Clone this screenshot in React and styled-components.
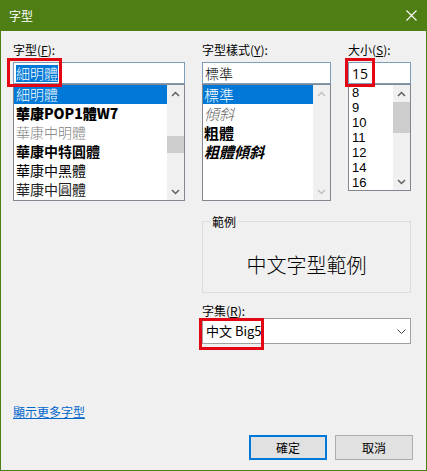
import React from 'react';
import styled, { createGlobalStyle } from 'styled-components';

const CJK = `"Noto Sans CJK TC", "Noto Sans", sans-serif`;
const NUM = `"Open Sans", "Noto Sans CJK TC", sans-serif`;
const SMALLNUM = `"Liberation Sans", Arial, sans-serif`;

const GlobalStyle = createGlobalStyle`
  html, body { margin: 0; padding: 0; background: #f0f0f0; }
  body { font-family: ${CJK}; color: #000; }
  * { box-sizing: border-box; }
`;

const Window = styled.div`
  width: 427px;
  height: 471px;
  display: flex;
  flex-direction: column;
  background: #f0f0f0;
  border: 1px solid #4e7e14;
  border-top: none;
  overflow: hidden;
`;

const TitleBar = styled.div`
  height: 31px;
  flex: none;
  background: #4e7e14;
  color: #fff;
  display: flex;
  align-items: center;
  padding-left: 8px;
  font-size: 12px;
`;

const Title = styled.div`
  flex: 1;
  line-height: 16px;
`;

const CloseButton = styled.div`
  width: 30px;
  height: 31px;
  display: flex;
  align-items: center;
  justify-content: center;
`;

const Body = styled.div`
  flex: 1;
  display: flex;
  flex-direction: column;
  padding: 11px 15px 10px 12px;
`;

const Grid = styled.div`
  display: grid;
  grid-template-columns: 172px 129px 63px;
  column-gap: 17px;
  align-items: start;
`;

const Column = styled.div`
  display: flex;
  flex-direction: column;
  grid-column: ${(p) => p.$span || 'auto'};
`;

const Label = styled.div`
  font-size: 12px;
  line-height: ${(p) => (p.$tight ? '14px' : '16px')};
  height: ${(p) => (p.$tight ? '14px' : '16px')};
  margin-bottom: ${(p) => (p.$tight ? '0' : '4px')};
  margin-top: ${(p) => p.$top || '0'};
  white-space: nowrap;
  u { text-decoration: underline; text-underline-offset: 1px; }
`;

const TextBox = styled.div`
  position: relative;
  height: 22px;
  background: #fff;
  border: 1px solid #7f9db9;
  display: flex;
  align-items: center;
  font-family: ${(p) => (p.$num ? NUM : CJK)};
  font-size: 14px;
  font-weight: ${(p) => p.$weight || 400};
  padding: 0 2px 0 ${(p) => (p.$num ? '3px' : '2px')};
`;

const Selected = styled.span`
  background: #0078d7;
  color: #fff;
  line-height: 17px;
  font-weight: 300;
`;

const RedBox = styled.div`
  position: absolute;
  left: ${(p) => p.$l}px;
  top: ${(p) => p.$t}px;
  width: ${(p) => p.$w}px;
  height: ${(p) => p.$h}px;
  border: 3px solid #e30613;
  pointer-events: none;
`;

const ListBox = styled.div`
  height: ${(p) => p.$h}px;
  background: #fff;
  border: 1px solid #828790;
  display: flex;
`;

const Items = styled.div`
  flex: 1;
  display: flex;
  flex-direction: column;
`;

const Row = styled.div`
  height: ${(p) => p.$h}px;
  line-height: ${(p) => p.$h}px;
  flex: none;
  padding-left: ${(p) => p.$pad || 2}px;
  font-family: ${(p) => (p.$num ? SMALLNUM : CJK)};
  font-size: ${(p) => p.$size || 14}px;
  font-weight: ${(p) => p.$weight || 400};
  font-style: ${(p) => (p.$italic ? 'italic' : 'normal')};
  color: ${(p) => (p.$selected ? '#fff' : p.$color || '#000')};
  background: ${(p) => (p.$selected ? '#0078d7' : 'transparent')};
  white-space: nowrap;
`;

const ScrollBar = styled.div`
  width: 17px;
  flex: none;
  background: #f0f0f0;
  display: flex;
  flex-direction: column;
`;

const ArrowButton = styled.div`
  height: 17px;
  flex: none;
  display: flex;
  align-items: center;
  justify-content: center;
`;

const Track = styled.div`
  flex: 1;
  display: flex;
  flex-direction: column;
`;

const Thumb = styled.div`
  margin-top: ${(p) => p.$offset}px;
  height: ${(p) => p.$h}px;
  background: #cdcdcd;
`;

const Group = styled.fieldset`
  margin: 13px 0 0 0;
  padding: 0;
  min-width: 0;
  border: 1px solid #dcdcdc;
`;

const Legend = styled.legend`
  margin-left: 7px;
  padding: 0 2px;
  font-size: 12px;
  line-height: 15px;
`;

const Sample = styled.div`
  height: 63px;
  padding-top: 21px;
  text-align: center;
  font-size: 20px;
  line-height: 30px;
  font-weight: 300;
`;

const Combo = styled.div`
  position: relative;
  height: 26px;
  background: #fff;
  border: 1px solid #a0a0a0;
  display: flex;
  align-items: center;
  padding: 0 4px 0 3px;
  font-size: 13px;
`;

const ComboText = styled.div`
  flex: 1;
  line-height: 18px;
`;

const Link = styled.a`
  margin-top: auto;
  margin-bottom: 15px;
  align-self: flex-start;
  font-size: 12px;
  line-height: 16px;
  color: #0066cc;
  text-decoration: underline;
  cursor: pointer;
`;

const ButtonRow = styled.div`
  display: flex;
  justify-content: flex-end;
  gap: 8px;
  margin-right: -2px;
`;

const Button = styled.button`
  width: 78px;
  height: 25px;
  background: #e1e1e1;
  border: ${(p) => (p.$default ? '2px solid #0078d7' : '1px solid #adadad')};
  font-family: ${CJK};
  font-size: 12px;
  color: #000;
  padding: 0;
  display: flex;
  align-items: center;
  justify-content: center;
`;

const Chevron = ({ up, disabled }) => (
  <svg width="9" height="6" viewBox="0 0 9 6">
    <polyline
      points={up ? '1,5 4.5,1.5 8,5' : '1,1 4.5,4.5 8,1'}
      fill="none"
      stroke={disabled ? '#c2c2c2' : '#606060'}
      strokeWidth="1.5"
    />
  </svg>
);

const Scroll = ({ disabled, offset, thumb }) => (
  <ScrollBar>
    <ArrowButton>
      <Chevron up disabled={disabled} />
    </ArrowButton>
    <Track>{!disabled && <Thumb $offset={offset} $h={thumb} />}</Track>
    <ArrowButton>
      <Chevron disabled={disabled} />
    </ArrowButton>
  </ScrollBar>
);

const fonts = [
  { name: '細明體', weight: 300, selected: true },
  { name: '華康POP1體W7', weight: 900 },
  { name: '華康中明體', weight: 300, color: '#808080' },
  { name: '華康中特圓體', weight: 700 },
  { name: '華康中黑體', weight: 400 },
  { name: '華康中圓體', weight: 400, color: '#222' },
];

const styles = [
  { name: '標準', weight: 300, selected: true },
  { name: '傾斜', weight: 300, italic: true, color: '#666' },
  { name: '粗體', weight: 700 },
  { name: '粗體傾斜', weight: 700, italic: true },
];

const sizes = ['8', '9', '10', '11', '12', '14', '16'];

export default function App() {
  return (
    <>
      <GlobalStyle />
      <Window>
        <TitleBar>
          <Title>字型</Title>
          <CloseButton>
            <svg width="11" height="11" viewBox="0 0 11 11">
              <path d="M0.5 0.5 L10.5 10.5 M10.5 0.5 L0.5 10.5" stroke="#fff" strokeWidth="1.1" />
            </svg>
          </CloseButton>
        </TitleBar>
        <Body>
          <Grid>
            <Column>
              <Label>
                字型(<u>F</u>):
              </Label>
              <TextBox>
                <Selected>細明體</Selected>
                <RedBox $l={-7} $t={-5} $w={55} $h={29} />
              </TextBox>
              <ListBox $h={117}>
                <Items>
                  {fonts.map((f) => (
                    <Row
                      key={f.name}
                      $h={19}
                      $size={14}
                      $weight={f.weight}
                      $color={f.color}
                      $selected={f.selected}
                    >
                      {f.name}
                    </Row>
                  ))}
                </Items>
                <Scroll offset={34} thumb={17} />
              </ListBox>
            </Column>
            <Column>
              <Label>
                字型樣式(<u>Y</u>):
              </Label>
              <TextBox $weight={300}>標準</TextBox>
              <ListBox $h={117}>
                <Items>
                  {styles.map((s) => (
                    <Row
                      key={s.name}
                      $h={19}
                      $size={15}
                      $pad={1}
                      $weight={s.weight}
                      $italic={s.italic}
                      $color={s.color}
                      $selected={s.selected}
                    >
                      {s.name}
                    </Row>
                  ))}
                </Items>
                <Scroll disabled />
              </ListBox>
            </Column>
            <Column>
              <Label>
                大小(<u>S</u>):
              </Label>
              <TextBox $num>
                15
                <RedBox $l={-4} $t={-5} $w={30} $h={29} />
              </TextBox>
              <ListBox $h={107}>
                <Items>
                  {sizes.map((s) => (
                    <Row key={s} $h={15} $size={13} $pad={3} $num>
                      {s}
                    </Row>
                  ))}
                </Items>
                <Scroll offset={0} thumb={31} />
              </ListBox>
            </Column>
          </Grid>
          <Grid>
            <Column $span="2 / 4">
              <Group>
                <Legend>範例</Legend>
                <Sample>中文字型範例</Sample>
              </Group>
              <Label $tight $top="11px">
                字集(<u>R</u>):
              </Label>
              <Combo>
                <ComboText>中文 Big5</ComboText>
                <svg width="9" height="5" viewBox="0 0 9 5">
                  <polyline points="0.5,0.5 4.5,4.5 8.5,0.5" fill="none" stroke="#404040" strokeWidth="1" />
                </svg>
                <RedBox $l={-4} $t={-1} $w={65} $h={32} />
              </Combo>
            </Column>
          </Grid>
          <Link>顯示更多字型</Link>
          <ButtonRow>
            <Button $default>確定</Button>
            <Button>取消</Button>
          </ButtonRow>
        </Body>
      </Window>
    </>
  );
}
